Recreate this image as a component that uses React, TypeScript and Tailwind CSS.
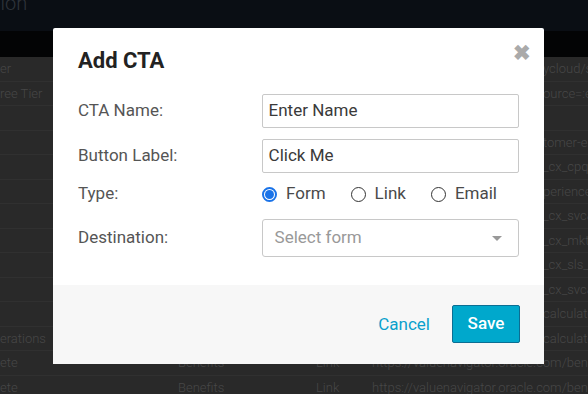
import React from "react";

type Row = { left: string; benefit: string; link: string; url: string; off: number };

const rows: Row[] = [
  { left: "er", benefit: "", link: "", url: "ycloud/sign-up", off: 171 },
  { left: "ree Tier", benefit: "", link: "", url: "ource=:ex:tb", off: 171 },
  { left: "", benefit: "", link: "", url: "", off: 171 },
  { left: "", benefit: "", link: "", url: "tomer-experience", off: 171 },
  { left: "", benefit: "", link: "", url: "_cx_cpq&source", off: 171 },
  { left: "", benefit: "", link: "", url: "perience", off: 171 },
  { left: "", benefit: "", link: "", url: "_cx_svc&source", off: 171 },
  { left: "", benefit: "", link: "", url: "_cx_mkt&source", off: 171 },
  { left: "", benefit: "", link: "", url: "_cx_sls_OCI", off: 171 },
  { left: "", benefit: "", link: "", url: "_cx_svc&source", off: 171 },
  { left: "", benefit: "", link: "", url: "calculator/", off: 171 },
  { left: "erations", benefit: "", link: "", url: "calculator/", off: 171 },
  { left: "ete", benefit: "Benefits", link: "Link", url: "https://valuenavigator.oracle.com/benefitcalculator/", off: 0 },
  { left: "ete", benefit: "Benefits", link: "Link", url: "https://valuenavigator.oracle.com/benefitcalculator/", off: 0 },
];

function Radio({ checked, label }: { checked?: boolean; label: string }) {
  return (
    <div className="flex items-center">
      {checked ? (
        <div className="w-[15px] h-[15px] rounded-full border-[2px] border-[#1a73e8] flex items-center justify-center bg-white">
          <div className="w-[9px] h-[9px] rounded-full bg-[#1a73e8]" />
        </div>
      ) : (
        <div className="w-[15px] h-[15px] rounded-full border-[1.5px] border-[#333] bg-white" />
      )}
      <span className="ml-[9px] text-[17px] text-[#4a4a4a]">{label}</span>
    </div>
  );
}

export default function App() {
  return (
    <div
      className="relative w-[588px] h-[394px] overflow-hidden bg-[#292929]"
      style={{ fontFamily: "Roboto, 'Liberation Sans', sans-serif" }}
    >
      <div className="h-[31px] bg-[#0a0e14] overflow-hidden">
        <div className="text-[20px] leading-[20px] text-[#2f343b] -mt-[7px] -ml-[6px] font-light">tion</div>
      </div>
      <div className="h-[26px] bg-[#030405]" />
      <div className="flex flex-col">
        {rows.map((r, i) => (
          <div
            key={i}
            className="h-[24.5px] flex items-center border-b border-[#303030] text-[13px] text-[#474747] font-light whitespace-nowrap overflow-hidden"
          >
            <div className="w-[178px] shrink-0">{r.left}</div>
            <div className="w-[138px] shrink-0">{r.benefit}</div>
            <div className="w-[56px] shrink-0">{r.link}</div>
            <div className="shrink-0" style={{ paddingLeft: r.off }}>{r.url}</div>
          </div>
        ))}
      </div>

      <div className="absolute left-[53px] top-[28px] w-[491px] h-[336px] bg-white flex flex-col rounded-[2px]">
        <div className="relative px-[25px] pt-[18px]">
          <div className="text-[22px] leading-[29px] font-bold text-[#222]">Add CTA</div>
          <div className="absolute right-[13px] top-[13px] text-[#aaa] text-[21px] leading-[24px] font-bold">✖</div>
        </div>
        <div className="px-[25px] pt-[19px] flex flex-col flex-1">
          <div className="flex items-center">
            <div className="w-[184px] text-[17px] text-[#555]">CTA Name:</div>
            <div className="w-[258px] h-[34px] border border-[#c8c8c8] rounded-[2px] flex items-center px-[6px] text-[17px] text-[#3a3a3a]">
              Enter Name
            </div>
          </div>
          <div className="flex items-center mt-[11px]">
            <div className="w-[184px] text-[17px] text-[#555]">Button Label:</div>
            <div className="w-[258px] h-[34px] border border-[#c8c8c8] rounded-[2px] flex items-center px-[6px] text-[17px] text-[#3a3a3a]">
              Click Me
            </div>
          </div>
          <div className="flex items-center mt-[9px] h-[24px]">
            <div className="w-[184px] text-[17px] text-[#555]">Type:</div>
            <div className="flex items-center gap-[25px]">
              <Radio checked label="Form" />
              <Radio label="Link" />
              <Radio label="Email" />
            </div>
          </div>
          <div className="flex items-center mt-[13px]">
            <div className="w-[184px] text-[17px] text-[#555]">Destination:</div>
            <div className="w-[258px] h-[38px] border border-[#c8c8c8] rounded-[3px] flex items-center justify-between pl-[12px] pr-[16px] text-[17px] text-[#999]">
              <span>Select form</span>
              <svg width="10" height="5" viewBox="0 0 10 5">
                <path d="M0 0 L10 0 L5 5 Z" fill="#999" />
              </svg>
            </div>
          </div>
        </div>
        <div className="h-[79px] bg-[#f7f7f7] flex items-center justify-end pr-[24px] gap-[22px]">
          <span className="text-[17px] text-[#0a9fcc]">Cancel</span>
          <div className="w-[68px] h-[38px] -mt-[2px] bg-[#00a8cc] border border-[#0b6e93] rounded-[2px] flex items-center justify-center text-white text-[17px] font-medium">
            Save
          </div>
        </div>
      </div>
    </div>
  );
}
